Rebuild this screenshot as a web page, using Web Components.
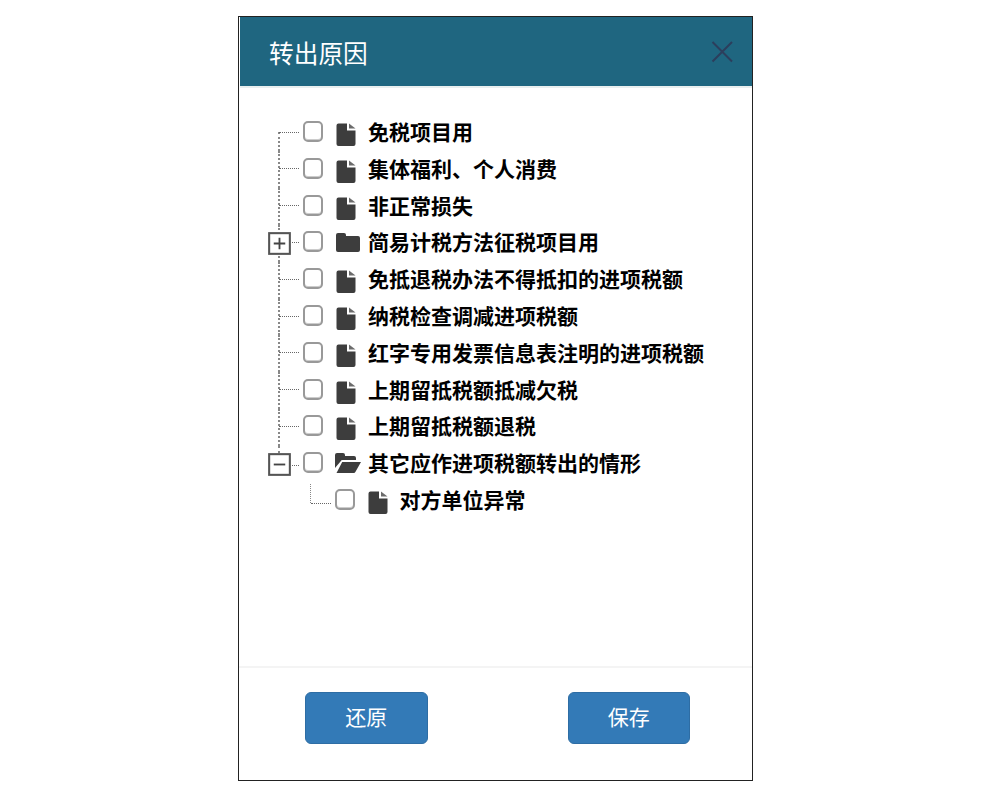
<!DOCTYPE html>
<html lang="zh">
<head>
<meta charset="utf-8">
<title>转出原因</title>
<style>
    html, body { margin: 0; background: #fff; }
    body { padding: 16px 0 0 238px; font-family: "Noto Sans CJK SC", "Liberation Sans", sans-serif; }
</style>
</head>
<body>
<reason-dialog>
    <span slot="title">转出原因</span>
    <tree-node first icon="file">免税项目用</tree-node>
    <tree-node icon="file">集体福利、个人消费</tree-node>
    <tree-node icon="file">非正常损失</tree-node>
    <tree-node icon="folder" toggle="plus">简易计税方法征税项目用</tree-node>
    <tree-node icon="file">免抵退税办法不得抵扣的进项税额</tree-node>
    <tree-node icon="file">纳税检查调减进项税额</tree-node>
    <tree-node icon="file">红字专用发票信息表注明的进项税额</tree-node>
    <tree-node icon="file">上期留抵税额抵减欠税</tree-node>
    <tree-node icon="file">上期留抵税额退税</tree-node>
    <tree-node last icon="open" toggle="minus">其它应作进项税额转出的情形</tree-node>
    <tree-node child icon="file">对方单位异常</tree-node>
    <dialog-button slot="footer">还原</dialog-button>
    <dialog-button slot="footer">保存</dialog-button>
</reason-dialog>

<script>
const ICONS = {
    file: '<svg width="20" height="23" viewBox="0 0 20 23"><path fill="#3d3d3d" d="M2.5 0.5H11V7.5H19.5V21a2 2 0 0 1-2 2H2.5a2 2 0 0 1-2-2V2.5a2 2 0 0 1 2-2Z"/><path fill="#6b6b6b" d="M13 0.5 19.5 5.5H13Z"/></svg>',
    folder: '<svg width="24" height="19" viewBox="0 0 24 19"><path fill="#3d3d3d" d="M2 0H8a2 2 0 0 1 2 2V3H22a2 2 0 0 1 2 2V17a2 2 0 0 1-2 2H2a2 2 0 0 1-2-2V2a2 2 0 0 1 2-2Z"/></svg>',
    open: '<svg width="26" height="20" viewBox="0 0 26 20"><path fill="#3d3d3d" d="M0 15V2a2 2 0 0 1 2-2H8a2 2 0 0 1 2 2V3H19a2 2 0 0 1 2 2V7H7.5a2 2 0 0 0-1.8 1.2ZM1.5 20 7.2 9H26L20.5 18.8a2 2 0 0 1-1.8 1.2Z"/></svg>'
};

class ReasonDialog extends HTMLElement {
    constructor() {
        super();
        this.attachShadow({ mode: 'open' });
        this.shadowRoot.innerHTML = `
            <style>
                :host {
                    display: flex;
                    flex-direction: column;
                    width: 515px;
                    height: 765px;
                    box-sizing: border-box;
                    border: 1px solid #222;
                    background: #fff;
                }
                header {
                    display: flex;
                    justify-content: space-between;
                    align-items: center;
                    height: 71px;
                    box-sizing: border-box;
                    margin-left: 1px;
                    padding: 0 18px 0 29px;
                    background: #1f6680;
                    border-bottom: 2px solid #e9efef;
                    color: #fff;
                    font-size: 24.7px;
                }
                svg { display: block; }
                main { flex: 1; padding-top: 26.6px; }
                footer {
                    display: flex;
                    justify-content: space-between;
                    height: 114px;
                    box-sizing: border-box;
                    padding: 24px 62px 0 66px;
                    border-top: 2px solid #f4f4f4;
                }
            </style>
            <header>
                <slot name="title"></slot>
                <svg width="24" height="24" viewBox="0 0 24 24"><path d="M2.5 2 22 21.5M22 2 2.5 21.5" stroke="#2c3e5c" stroke-width="2" fill="none"/></svg>
            </header>
            <main><slot></slot></main>
            <footer><slot name="footer"></slot></footer>
        `;
    }
}

class TreeNode extends HTMLElement {
    constructor() {
        super();
        this.attachShadow({ mode: 'open' });
        const toggle = this.getAttribute('toggle');
        const icon = this.getAttribute('icon') || 'file';
        const bar = toggle === 'plus' ? 'M5 10H15M10 5V15' : 'M5 10H15';
        this.shadowRoot.innerHTML = `
            <style>
                :host {
                    display: flex;
                    align-items: center;
                    position: relative;
                    height: 36.8px;
                    padding-left: 64px;
                    color: #000;
                    font-size: 21px;
                    font-weight: 700;
                    white-space: nowrap;
                }
                :host([child]) { padding-left: 95.5px; }
                slot { display: block; margin-top: -4px; }
                .check {
                    width: 20px;
                    height: 21px;
                    box-sizing: border-box;
                    margin: -3px 13px 0 0;
                    border: 2px solid #999;
                    border-radius: 5px;
                    background: #fff;
                    box-shadow: inset 0 -1px 0 #ccc;
                }
                .icon { display: flex; justify-content: flex-start; width: 32px; margin-top: 3px; }
                :host([icon="folder"]) .icon { margin-top: -2px; }
                :host([icon="open"]) .icon { margin-top: -2px; margin-left: -1px; width: 33px; }
                svg { display: block; }
                .v, .h { position: absolute; }
                .v {
                    left: 39px;
                    top: 0;
                    bottom: 0;
                    border-left: 2px dotted #888;
                }
                :host([first]) .v { top: 17px; }
                :host([last]) .v { bottom: 26px; }
                :host([child]) .v { left: 71px; top: 1px; bottom: 16px; border-left-width: 1.5px; }
                .h {
                    left: 40px;
                    top: 17px;
                    width: 20px;
                    border-top: 1px dotted #666;
                }
                :host([last]) .h { top: 19px; }
                :host([child]) .h { left: 72px; top: 20px; }
                .toggle {
                    position: absolute;
                    left: 29px;
                    top: 7px;
                    background: #fff;
                }
            </style>
            <span class="v"></span><span class="h"></span>
            ${toggle ? `<svg class="toggle" width="23" height="23" viewBox="0 0 20 20"><rect x="1" y="1" width="18" height="18" fill="#fff" stroke="#555" stroke-width="1.8"/><path d="${bar}" stroke="#444" stroke-width="1.6"/></svg>` : ''}
            <span class="check"></span>
            <span class="icon">${ICONS[icon]}</span>
            <slot></slot>
        `;
    }
}

class DialogButton extends HTMLElement {
    constructor() {
        super();
        this.attachShadow({ mode: 'open' });
        this.shadowRoot.innerHTML = `
            <style>
                :host {
                    display: flex;
                    justify-content: center;
                    align-items: center;
                    width: 122.5px;
                    height: 52px;
                    box-sizing: border-box;
                    padding-bottom: 4px;
                    background: #337ab7;
                    border: 1px solid #2e6da4;
                    border-radius: 6px;
                    color: #fff;
                    font-size: 21px;
                    cursor: pointer;
                }
            </style>
            <slot></slot>
        `;
    }
}

customElements.define('reason-dialog', ReasonDialog);
customElements.define('tree-node', TreeNode);
customElements.define('dialog-button', DialogButton);
</script>
</body>
</html>
